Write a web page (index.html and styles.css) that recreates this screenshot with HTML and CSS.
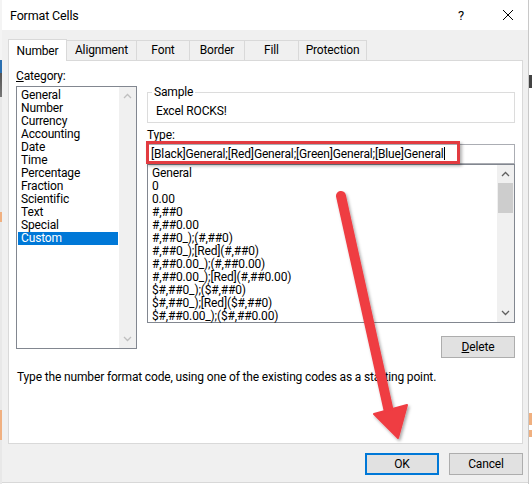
FILE: index.html
```html
<!DOCTYPE html>
<html lang="en">
<head>
    <meta charset="UTF-8">
    <title>Format Cells</title>
    <link rel="stylesheet" href="styles.css">
</head>
<body>
<div class="desktop">
    <div class="edge edge-left"></div>

    <div class="dialog">
        <div class="titlebar">
            <span class="title">Format Cells</span>
            <span class="help">?</span>
            <svg class="close" width="12" height="12" viewBox="0 0 12 12">
                <path d="M1 1 L11 11 M11 1 L1 11" stroke="#000" stroke-width="1" fill="none"/>
            </svg>
        </div>

        <div class="dialog-body">
            <div class="tabs">
                <div class="tab tab-active" style="width:59px">Number</div>
                <div class="tab" style="width:70px">Alignment</div>
                <div class="tab" style="width:53px">Font</div>
                <div class="tab" style="width:55px">Border</div>
                <div class="tab" style="width:54px">Fill</div>
                <div class="tab" style="width:68px">Protection</div>
            </div>

            <div class="panel">
                <div class="columns">
                    <div class="col-left">
                        <div class="label"><u>C</u>ategory:</div>
                        <div class="listbox category-list">
                            <ul class="items">
                                <li>General</li>
                                <li>Number</li>
                                <li>Currency</li>
                                <li>Accounting</li>
                                <li>Date</li>
                                <li>Time</li>
                                <li>Percentage</li>
                                <li>Fraction</li>
                                <li>Scientific</li>
                                <li>Text</li>
                                <li>Special</li>
                                <li class="selected">Custom</li>
                            </ul>
                            <div class="scrollbar disabled">
                                <svg class="arrow" width="9" height="6" viewBox="0 0 9 6"><path d="M1 5 L4.5 1.5 L8 5" fill="none" stroke="currentColor" stroke-width="1.3"/></svg>
                                <div class="track"></div>
                                <svg class="arrow" width="9" height="6" viewBox="0 0 9 6"><path d="M1 1 L4.5 4.5 L8 1" fill="none" stroke="currentColor" stroke-width="1.3"/></svg>
                            </div>
                        </div>
                    </div>

                    <div class="col-right">
                        <fieldset class="sample">
                            <legend>Sample</legend>
                            <div class="sample-text">Excel ROCKS!</div>
                        </fieldset>

                        <div class="label type-label">Type:</div>
                        <div class="type-field">
                            <div class="type-input">[Black]General;[Red]General;[Green]General;[Blue]General<span class="caret"></span></div>
                            <div class="highlight"></div>
                        </div>
                        <div class="listbox type-list">
                            <ul class="items">
                                <li>General</li>
                                <li>0</li>
                                <li>0.00</li>
                                <li>#,##0</li>
                                <li>#,##0.00</li>
                                <li>#,##0_);(#,##0)</li>
                                <li>#,##0_);[Red](#,##0)</li>
                                <li>#,##0.00_);(#,##0.00)</li>
                                <li>#,##0.00_);[Red](#,##0.00)</li>
                                <li>$#,##0_);($#,##0)</li>
                                <li>$#,##0_);[Red]($#,##0)</li>
                                <li>$#,##0.00_);($#,##0.00)</li>
                            </ul>
                            <div class="scrollbar">
                                <svg class="arrow" width="9" height="6" viewBox="0 0 9 6"><path d="M1 5 L4.5 1.5 L8 5" fill="none" stroke="currentColor" stroke-width="1.3"/></svg>
                                <div class="track"><div class="thumb"></div></div>
                                <svg class="arrow" width="9" height="6" viewBox="0 0 9 6"><path d="M1 1 L4.5 4.5 L8 1" fill="none" stroke="currentColor" stroke-width="1.3"/></svg>
                            </div>
                        </div>
                        <div class="delete-row">
                            <button class="btn"><u>D</u>elete</button>
                        </div>
                    </div>
                </div>

                <p class="hint">Type the number format code, using one of the existing codes as a starting point.</p>
            </div>

            <div class="buttons">
                <button class="btn btn-default">OK</button>
                <button class="btn">Cancel</button>
            </div>
        </div>
    </div>

    <div class="edge edge-right"></div>

    <!-- red arrow drawn over the dialog -->
    <svg class="arrow-overlay" width="532" height="484" viewBox="0 0 532 484">
        <defs>
            <filter id="shadow" x="-20%" y="-20%" width="140%" height="140%">
                <feDropShadow dx="1.5" dy="2" stdDeviation="1.8" flood-color="#000" flood-opacity="0.35"/>
            </filter>
        </defs>
        <g filter="url(#shadow)" fill="#ef3c43" stroke="#ef3c43">
            <line x1="341" y1="196" x2="389" y2="412" stroke-width="10" stroke-linecap="round"/>
            <polygon points="374,414 407,405 398,438" stroke-width="2" stroke-linejoin="round"/>
        </g>
    </svg>
</div>
</body>
</html>
```

FILE: styles.css
```css
body {
    margin: 0;
    font-family: Roboto, 'Noto Sans', sans-serif;
    font-size: 12px;
    letter-spacing: -0.15px;
    color: #000;
    background: #fff;
    overflow: hidden;
}

.desktop {
    position: relative;
    display: flex;
    width: 532px;
    height: 484px;
}

/* bits of the spreadsheet behind the dialog */
.edge {
    height: 484px;
}

.edge-left {
    width: 2px;
    background: linear-gradient(to bottom,
        #f4f4f4 0, #f4f4f4 60px, #2a6fb0 60px, #2a6fb0 73px, #555 73px, #777 97px,
        #e8e8e8 97px, #e8e8e8 212px, #f0b080 212px, #f0b080 222px,
        #e8e8e8 222px, #e8e8e8 410px, #f0b080 410px, #f0b080 440px, #e8e8e8 440px);
}

.edge-right {
    flex: 1;
    border-left: 1px solid #c8c8c8;
    background: linear-gradient(to bottom,
        #fff 0, #fff 75px, #444 75px, #444 88px, #fff 88px, #fff 413px,
        #f0b080 413px, #f0b080 425px, #fff 425px, #fff 430px, #f0b080 430px, #f0b080 437px, #fff 437px);
}

.dialog {
    width: 526px;
    height: 482px;
    display: flex;
    flex-direction: column;
    border-bottom: 1px solid #d8d8d8;
}

.titlebar {
    height: 30px;
    background: #fff;
    display: flex;
    align-items: center;
    padding-left: 8px;
}

.title {
    flex: 1;
    font-size: 12.5px;
    margin-top: 1px;
}

.help {
    font-size: 13px;
    margin-right: 38px;
}

.close {
    margin-right: 14px;
}

.dialog-body {
    flex: 1;
    background: #f0f0f0;
    padding: 9px 5px 0 6px;
}

.tabs {
    display: flex;
    align-items: flex-end;
    height: 21px;
    position: relative;
    z-index: 1;
}

.tab {
    box-sizing: border-box;
    height: 20px;
    line-height: 18px;
    text-align: center;
    border: 1px solid #d9d9d9;
    border-bottom: none;
    border-left: none;
    background: #f0f0f0;
}

.tab-active {
    height: 22px;
    margin-bottom: -1px;
    background: #fff;
    border-left: 1px solid #d9d9d9;
    line-height: 22px;
}

.panel {
    box-sizing: border-box;
    height: 384px;
    background: #fff;
    border: 1px solid #d9d9d9;
    padding: 7px 7px 0 7px;
}

.columns {
    display: flex;
    gap: 10px;
}

.col-left {
    width: 121px;
}

.col-right {
    flex: 1;
    display: flex;
    flex-direction: column;
}

.label {
    line-height: 16px;
    height: 16px;
}

.listbox {
    display: flex;
    box-sizing: border-box;
    border: 1px solid #828790;
    background: #fff;
}

.items {
    flex: 1;
    list-style: none;
    margin: 0;
    padding: 1px;
}

.items li {
    line-height: 13px;
    height: 13px;
    padding-left: 3px;
    white-space: nowrap;
}

.category-list {
    margin-top: 2px;
    height: 263px;
}

.category-list .items {
    padding-top: 2px;
}

.items li.selected {
    background: #0078d7;
    color: #fff;
}

.scrollbar {
    width: 17px;
    background: #f0f0f0;
    display: flex;
    flex-direction: column;
    align-items: center;
    color: #606060;
}

.scrollbar.disabled {
    color: #bfbfbf;
}

.scrollbar .arrow {
    margin: 6px 0;
    flex: none;
}

.track {
    flex: 1;
    align-self: stretch;
    padding: 0 1px;
}

.thumb {
    height: 30px;
    background: #cdcdcd;
}

fieldset.sample {
    margin: 16px 0 0 0;
    padding: 3px 8px 3px 8px;
    border: 1px solid #dcdcdc;
    min-inline-size: 0;
}

.sample legend {
    padding: 0 2px;
    margin-left: -4px;
    line-height: 16px;
}

.sample-text {
    line-height: 16px;
}

.type-label {
    margin-top: 4px;
}

.type-field {
    position: relative;
    margin-top: 1px;
}

.type-input {
    box-sizing: border-box;
    height: 20px;
    border: 1px solid #abadb3;
    padding-left: 3px;
    line-height: 18px;
    white-space: nowrap;
}

.caret {
    display: inline-block;
    width: 1px;
    height: 13px;
    background: #000;
    vertical-align: -2px;
}

.highlight {
    position: absolute;
    left: -1px;
    top: -3px;
    width: 314px;
    height: 23px;
    box-sizing: border-box;
    border: 3px solid #e23b40;
    box-shadow: 2px 2px 3px rgba(0, 0, 0, .3);
}

.type-list {
    height: 159px;
}

.type-list .items {
    padding-top: 2px;
}

.delete-row {
    display: flex;
    justify-content: flex-end;
    margin-top: 13px;
}

.btn {
    box-sizing: border-box;
    width: 74px;
    height: 22px;
    font-family: inherit;
    font-size: 12px;
    letter-spacing: inherit;
    color: #000;
    background: #e1e1e1;
    border: 1px solid #adadad;
    padding: 0;
}

.btn u {
    text-decoration-thickness: 1px;
}

.btn-default {
    border: 2px solid #0078d7;
}

.hint {
    margin: 11px 0 0 1px;
    line-height: 16px;
}

.buttons {
    display: flex;
    justify-content: flex-end;
    gap: 10px;
    margin-top: 9px;
}

.arrow-overlay {
    position: absolute;
    left: 0;
    top: 0;
    pointer-events: none;
}
```
